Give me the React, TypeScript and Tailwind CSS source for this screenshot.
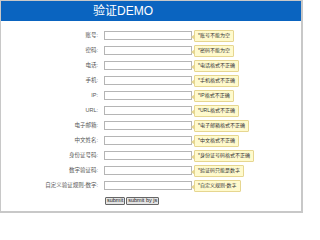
import React from "react";

const rows: [string, string][] = [
  ["账号:", "*账号不能为空"],
  ["密码:", "*密码不能为空"],
  ["电话:", "*电话格式不正确"],
  ["手机:", "*手机格式不正确"],
  ["IP:", "*IP格式不正确"],
  ["URL:", "*URL格式不正确"],
  ["电子邮箱:", "*电子邮箱格式不正确"],
  ["中文姓名:", "*中文格式不正确"],
  ["身份证号码:", "*身份证号码格式不正确"],
  ["数字验证码:", "*验证码只能是数字"],
  ["自定义验证规则-数字:", "*自定义规则-数字"],
];

const Tip = ({ text }: { text: string }) => (
  <div className="relative ml-[2px] flex h-[12px] items-center rounded-[1px] border border-[#e6d690] bg-[#fffacd] px-[3px] text-[5px] leading-none text-[#333]">
    <span className="absolute left-[-4px] top-[3px] h-0 w-0 border-y-[3px] border-r-[4px] border-y-transparent border-r-[#e6d690]" />
    {text}
  </div>
);

export default function App() {
  return (
    <div
      className="h-[213px] w-[303px] overflow-hidden bg-[#c8c8c8] pl-[1px] pr-[2px] pt-[1px]"
      style={{ fontFamily: '"Liberation Sans", "Noto Sans CJK SC", sans-serif' }}
    >
      <div className="h-[210px] bg-white">
        <div className="flex h-[20px] items-center bg-[#0a64c0] pl-[92px] text-[12px] text-white">
          验证DEMO
        </div>
        <div className="pt-[7px]">
          {rows.map(([label, tip]) => (
            <div key={label} className="flex h-[15px] items-center">
              <div className="w-[97px] text-right text-[5.5px] text-[#555]">{label}</div>
              <div className="ml-[6px] h-[9px] w-[88px] border border-[#b5b5b5] bg-white" />
              <Tip text={tip} />
            </div>
          ))}
          <div className="flex h-[15px] items-center gap-[1px] pl-[104px]">
            <button className="h-[8px] rounded-[1px] border border-[#666] bg-[#e4e4e4] px-[1px] text-[5.5px] leading-none text-[#222]">
              submit
            </button>
            <button className="h-[8px] rounded-[1px] border border-[#666] bg-[#e4e4e4] px-[1px] text-[5.5px] leading-none text-[#222]">
              submit by js
            </button>
          </div>
        </div>
      </div>
    </div>
  );
}
